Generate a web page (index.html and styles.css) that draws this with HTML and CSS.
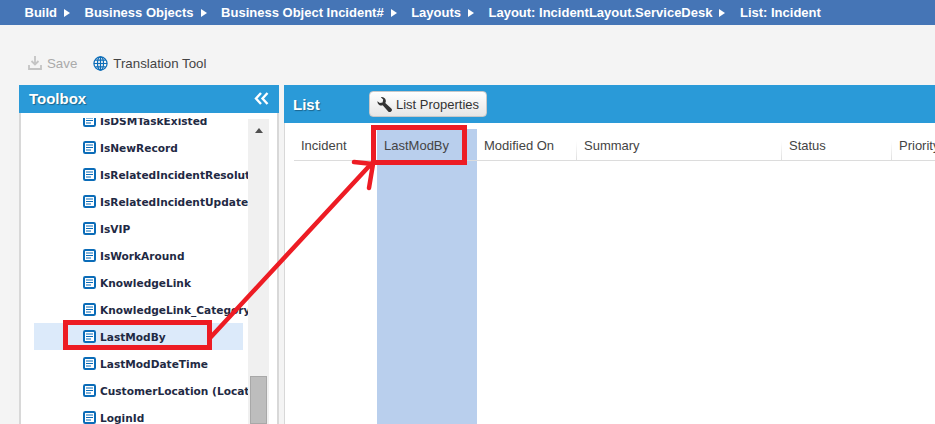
FILE: index.html
```html
<!DOCTYPE html>
<html lang="en">
<head>
  <meta charset="UTF-8">
  <title>List: Incident</title>
  <link rel="stylesheet" href="styles.css">
</head>
<body>
  <svg width="0" height="0" class="defs">
    <symbol id="field" viewBox="0 0 13 13">
      <rect x="1" y="1" width="11" height="11" rx="1.200" fill="#fff" stroke="#0b6cb8" stroke-width="2"/>
      <path d="M3 4h7M3 6.500h7M3 9h5" stroke="#0b6cb8" stroke-width="1" fill="none"/>
    </symbol>
  </svg>

  <nav class="crumbs">
    <span class="crumb">Build</span>
    <span class="crumb">Business Objects</span>
    <span class="crumb">Business Object Incident#</span>
    <span class="crumb">Layouts</span>
    <span class="crumb">Layout: IncidentLayout.ServiceDesk</span>
    <span class="crumb last">List: Incident</span>
  </nav>

  <div class="toolbar">
    <span class="tool disabled">
      <svg width="14" height="14" viewBox="0 0 14 14"><path d="M7 0v8M3.500 5L7 8.500L10.500 5M1 9v4h12V9" fill="none" stroke="#c4c4c4" stroke-width="1.800"/></svg>
      Save
    </span>
    <span class="tool">
      <svg width="15" height="15" viewBox="0 0 16 16"><g fill="none" stroke="#0b6cb8" stroke-width="1.300"><circle cx="8" cy="8" r="7"/><ellipse cx="8" cy="8" rx="3.200" ry="7"/><path d="M8 1v14M1 8h14M2.400 4.400h11.200M2.400 11.600h11.200"/></g></svg>
      Translation Tool
    </span>
  </div>

  <main class="panels">
    <section class="toolbox">
      <header class="toolbox-head">
        <span>Toolbox</span>
        <svg width="15" height="13" viewBox="0 0 15 13"><path d="M7 1L2 6.500L7 12M13.500 1L8.500 6.500L13.500 12" fill="none" stroke="#fff" stroke-width="2.400"/></svg>
      </header>
      <div class="toolbox-body">
        <div class="scroller">
          <ul class="fields">
            <li class="field"><svg class="field-icon"><use href="#field"/></svg>IsDSMTaskExisted</li>
            <li class="field"><svg class="field-icon"><use href="#field"/></svg>IsNewRecord</li>
            <li class="field"><svg class="field-icon"><use href="#field"/></svg>IsRelatedIncidentResolution</li>
            <li class="field"><svg class="field-icon"><use href="#field"/></svg>IsRelatedIncidentUpdate</li>
            <li class="field"><svg class="field-icon"><use href="#field"/></svg>IsVIP</li>
            <li class="field"><svg class="field-icon"><use href="#field"/></svg>IsWorkAround</li>
            <li class="field"><svg class="field-icon"><use href="#field"/></svg>KnowledgeLink</li>
            <li class="field"><svg class="field-icon"><use href="#field"/></svg>KnowledgeLink_Category</li>
            <li class="field selected"><svg class="field-icon"><use href="#field"/></svg>LastModBy</li>
            <li class="field"><svg class="field-icon"><use href="#field"/></svg>LastModDateTime</li>
            <li class="field"><svg class="field-icon"><use href="#field"/></svg>CustomerLocation (Location)</li>
            <li class="field"><svg class="field-icon"><use href="#field"/></svg>LoginId</li>
          </ul>
        </div>
        <div class="scrollbar">
          <span class="scroll-up"></span>
          <span class="scroll-thumb"></span>
        </div>
      </div>
    </section>

    <section class="list">
      <header class="list-head">
        <span class="list-title">List</span>
        <button class="props">
          <svg width="15" height="15" viewBox="0 0 15 15"><path d="M.4 4.200a4 4 0 0 0 5.300 4.100l5.300 6a2 2 0 0 0 3.300-2.900l-6-5.400A4 4 0 0 0 3.800.2l2.400 2.400-.6 2.800-2.800.6z" fill="#333"/></svg>
          List Properties
        </button>
      </header>
      <div class="columns">
        <div class="col col-incident">Incident</div>
        <div class="col col-last">LastModBy</div>
        <div class="col col-modified">Modified On</div>
        <div class="col col-summary">Summary</div>
        <div class="col col-status">Status</div>
        <div class="col col-priority">Priority</div>
      </div>
      <div class="drop-column"></div>
    </section>
  </main>

  <div class="mark mark-field"></div>
  <div class="mark mark-col"></div>
  <svg class="arrow" width="935" height="424" viewBox="0 0 935 424">
    <path d="M210 338L372 163M354 162L373 164L369 188" fill="none" stroke="#ed1c24" stroke-width="4.500" stroke-linecap="round"/>
  </svg>
</body>
</html>
```

FILE: styles.css
```css
* {
  margin: 0;
  padding: 0;
  box-sizing: border-box;
}
html, body {
  height: 424px;
  overflow: hidden;
}
body {
  font-family: 'Liberation Sans', Arial, sans-serif;
  background: #f4f4f4;
  color: #333;
  position: relative;
}
.defs {
  position: absolute;
}
.crumbs {
  height: 25px;
  background: #4575b6;
  color: #fff;
  font-size: 13px;
  font-weight: bold;
  display: flex;
  align-items: center;
  padding-left: 24.500px;
  gap: 14.500px;
}
.crumb {
  display: flex;
  align-items: center;
  gap: 7px;
}
.crumb::after {
  content: "";
  border-left: 6px solid #fff;
  border-top: 4px solid transparent;
  border-bottom: 4px solid transparent;
}
.crumb.last::after {
  display: none;
}
.toolbar {
  height: 60px;
  padding: 28px 0 0 28px;
  display: flex;
  align-items: flex-start;
  gap: 16px;
  font-size: 13.300px;
}
.tool {
  display: flex;
  align-items: center;
  gap: 5px;
  height: 20px;
  color: #444;
}
.tool.disabled {
  color: #aaa;
}
.panels {
  display: flex;
  gap: 5px;
  padding-left: 19px;
  height: 339px;
}
.toolbox {
  flex: none;
  width: 260px;
  background: #fff;
  border: solid #d8d8d8;
  border-width: 0 2px;
  display: flex;
  flex-direction: column;
}
.toolbox-head {
  height: 28px;
  margin: 0 -2px;
  background: #2a9ad8;
  color: #fff;
  font-size: 15px;
  font-weight: bold;
  text-shadow: 1px 1px 1px rgba(0, 0, 0, 0.35);
  display: flex;
  align-items: center;
  justify-content: space-between;
  padding: 0 10px 2px;
}
.toolbox-body {
  flex: 1;
  position: relative;
  overflow: hidden;
}
.scroller {
  margin-top: 5px;
  width: 227px;
  height: 306px;
  overflow: hidden;
}
.fields {
  list-style: none;
  margin-top: -11px;
}
.field {
  height: 27px;
  margin-left: 13px;
  width: 209px;
  padding-left: 49px;
  display: flex;
  align-items: center;
  gap: 4px;
  font-family: 'DejaVu Sans', Verdana, sans-serif;
  font-size: 10.600px;
  font-weight: bold;
  color: #1f2a44;
  white-space: nowrap;
}
.field.selected {
  background: #dceafa;
}
.field-icon {
  width: 13px;
  height: 13px;
  flex: none;
}
.scrollbar {
  position: absolute;
  top: 6px;
  right: 8px;
  bottom: 0;
  width: 21px;
  background: #f0f0f0;
}
.scroll-up {
  position: absolute;
  top: 9px;
  left: 7px;
  border-bottom: 5px solid #505050;
  border-left: 4px solid transparent;
  border-right: 4px solid transparent;
}
.scroll-thumb {
  position: absolute;
  top: 257px;
  left: 2px;
  bottom: 0;
  width: 17px;
  background: #bdbdbd;
  border: 1px solid #a8a8a8;
}
.list {
  flex: 1;
  background: #fff;
  border-left: 1px solid #d8d8d8;
  position: relative;
}
.list-head {
  height: 38px;
  margin-left: -1px;
  background: #2a9ad8;
  display: flex;
  align-items: center;
  padding-left: 9px;
}
.list-title {
  color: #fff;
  font-size: 15px;
  font-weight: bold;
  text-shadow: 1px 1px 1px rgba(0, 0, 0, 0.35);
  width: 76px;
}
.props {
  height: 26px;
  width: 118px;
  border: 1px solid #c8c8c8;
  border-radius: 4px;
  background: linear-gradient(#ffffff, #e6e6e6);
  color: #333;
  font-family: inherit;
  font-size: 13px;
  display: flex;
  align-items: center;
  justify-content: center;
  gap: 4px;
}
.columns {
  display: flex;
  margin: 6px 0 0 9px;
  height: 32px;
  border-bottom: 1px solid #dcdcdc;
  font-size: 13px;
  color: #444;
  position: relative;
  z-index: 1;
}
.col {
  padding-left: 7px;
  line-height: 33px;
  white-space: nowrap;
  flex: none;
  border-right: 1px solid;
  border-image: linear-gradient(transparent 40%, #dddddd) 1;
}
.col-incident { width: 83px; border-right: 0; }
.col-last { width: 100px; background: #b9cfed; border-right: 0; }
.col-modified { width: 100px; }
.col-summary { width: 205px; }
.col-status { width: 110px; }
.col-priority { width: 60px; border-right: 0; }
.drop-column {
  position: absolute;
  top: 44px;
  bottom: 0;
  left: 92px;
  width: 100px;
  background: #b9cfed;
}
.mark {
  position: absolute;
  z-index: 2;
  border: 5px solid #ed1c24;
}
.mark-field {
  left: 63px;
  top: 320px;
  width: 149px;
  height: 30px;
}
.mark-col {
  left: 371px;
  top: 125px;
  width: 96px;
  height: 40px;
}
.arrow {
  position: absolute;
  z-index: 3;
  left: 0;
  top: 0;
  pointer-events: none;
}
```
